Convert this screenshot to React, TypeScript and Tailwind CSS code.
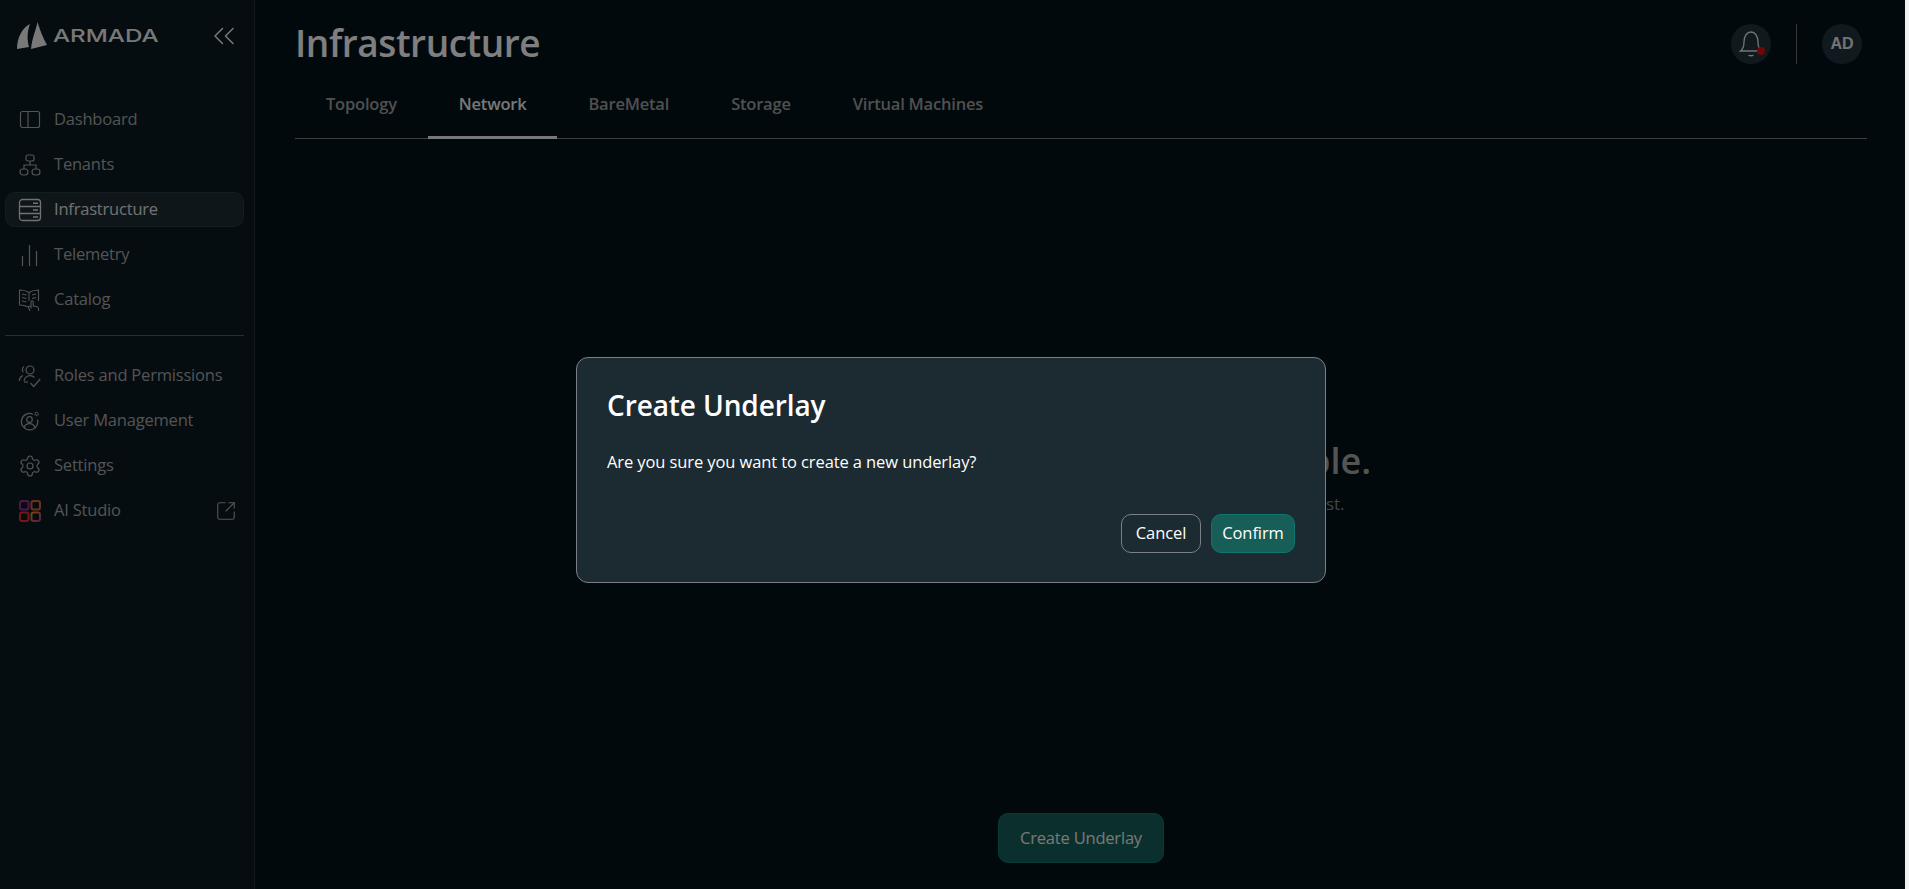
import { ChevronsLeft, Settings, SquareArrowOutUpRight } from "lucide-react"
import type { ReactNode } from "react"

function DashboardIcon() {
  return (
    <svg width="24" height="24" viewBox="0 0 24 24" fill="none" stroke="currentColor" strokeWidth="1.2">
      <rect x="2.5" y="3.5" width="19" height="16" rx="2" />
      <path d="M10 3.5v16" />
    </svg>
  )
}

function TenantsIcon() {
  return (
    <svg width="24" height="24" viewBox="0 0 24 24" fill="none" stroke="currentColor" strokeWidth="1.2">
      <rect x="8" y="2" width="8" height="6" rx="2" />
      <path d="M12 8v4M6 16v-4h12v4" />
      <rect x="2" y="16" width="8" height="6" rx="3" />
      <rect x="14" y="16" width="8" height="6" rx="3" />
    </svg>
  )
}

function InfraIcon() {
  return (
    <svg width="24" height="24" viewBox="0 0 24 24" fill="none" stroke="currentColor" strokeWidth="1.3">
      <rect x="1.5" y="1.5" width="21" height="21" rx="3" />
      <path d="M1.5 8.5h21M1.5 15.5h21" />
      <path d="M15 5.2h5M15 12h5M15 19h5" strokeWidth="1.6" />
    </svg>
  )
}

function TelemetryIcon() {
  return (
    <svg width="24" height="24" viewBox="0 0 24 24" fill="none" stroke="currentColor" strokeWidth="1.2">
      <path d="M4.5 13v10M11.5 2v21M18.5 8v15" />
    </svg>
  )
}

function CatalogIcon() {
  return (
    <svg width="24" height="24" viewBox="0 0 24 24" fill="none" stroke="currentColor" strokeWidth="1.1">
      <path d="M11 4.5C8 2.5 4.5 2 1.5 2v15c3 0 6 .5 8.5 2" />
      <path d="M11 4.5C14 2.5 17.5 2 20.5 2v11" />
      <path d="M11 4.5V13" />
      <path d="M4 6l4.5 1M4 9.5l4.5 1M4 13l4.5 1M14 7l4-1M14 10.5l4-1" />
      <path d="M12 23l-1.5-3.5c-.5-1.2 1-2 1.8-1l.7 1v-5.7c0-1.4 2.2-1.4 2.2 0V18l3.8.8c1 .2 1.7 1.1 1.6 2.2l-.2 2" />
    </svg>
  )
}

function RolesIcon() {
  return (
    <svg width="24" height="24" viewBox="0 0 24 24" fill="none" stroke="currentColor" strokeWidth="1.2">
      <circle cx="12" cy="6" r="4" />
      <path d="M6 2.6C4.2 3.6 3.6 6.4 5.4 8.2" />
      <path d="M4.8 11.5C2.8 12.5 1.5 14.3 1.2 17" />
      <path d="M6 17c.4-3 3-5.4 6-5.4 1.8 0 3.2.6 4.4 1.7" />
      <path d="M6 18h4" />
      <path d="M12.5 19l3.2 3.5 6.5-7.5" />
    </svg>
  )
}

function UserMgmtIcon() {
  return (
    <svg width="24" height="24" viewBox="0 0 24 24" fill="none" stroke="currentColor" strokeWidth="1.2">
      <path d="M15 5.2A8.2 8.2 0 1 0 19.5 10.5" />
      <circle cx="11.5" cy="10.5" r="2.8" />
      <path d="M6.2 18.5c.8-2.4 2.8-3.8 5.3-3.8s4.5 1.4 5.3 3.8" />
      <circle cx="18.5" cy="5" r="1.6" strokeDasharray="1.2 0.5" strokeWidth="1.3" />
    </svg>
  )
}

function AiStudioIcon() {
  return (
    <svg width="24" height="24" viewBox="0 0 24 24" fill="none" strokeWidth="2">
      <defs>
        <linearGradient id="aiStudioGrad" x1="13" y1="13" x2="24" y2="24" gradientUnits="userSpaceOnUse">
          <stop offset="0" stopColor="#f0932b" />
          <stop offset="1" stopColor="#a8269a" />
        </linearGradient>
      </defs>
      <rect x="2" y="2" width="8.5" height="8.5" rx="2" stroke="#a8269a" />
      <rect x="13.5" y="2" width="8.5" height="8.5" rx="2" stroke="#e0632f" />
      <rect x="2" y="13.5" width="8.5" height="8.5" rx="2" stroke="#e0322f" />
      <rect x="13.5" y="13.5" width="8.5" height="8.5" rx="2" stroke="url(#aiStudioGrad)" />
    </svg>
  )
}

function NavItem({ icon, label, active, trailing }: { icon: ReactNode; label: string; active?: boolean; trailing?: ReactNode }) {
  return (
    <div
      className={
        "flex h-[35px] items-center gap-3 rounded-[10px] border pl-[12px] pr-[5px] text-[16.5px] tracking-[-0.2px] " +
        (active ? "border-[#2a3a42] bg-[#1e2c33] text-[#e2e2e2]" : "border-transparent text-[#a8a8a8]")
      }
    >
      <span className="shrink-0">{icon}</span>
      <span className="flex-1">{label}</span>
      {trailing}
    </div>
  )
}

function Sidebar() {
  return (
    <aside className="flex h-full w-[255px] shrink-0 flex-col border-r border-[#2a3339] bg-[#0a1a22] pl-[5px] pr-[10px] text-[#a8a8a8]">
      <div className="flex h-[102px] items-start justify-between pl-[11px] pr-[2px] pt-[22px]">
        <div className="flex items-center gap-[5px]">
          <svg width="32" height="28" viewBox="16 22 32 28" fill="#f2f2f2">
            <path d="M17 49C17 38 22 28 30 24C27 32 27 40 29 47Z" />
            <path d="M37.5 22C36 30 32 38 31 49L47 45C43 38 40 30 37.5 22Z" />
          </svg>
          <span className="w-[107px] origin-left scale-x-[1.38] font-['Inter',sans-serif] text-[17.5px] font-medium leading-none text-[#f2f2f2]">
            ARMADA
          </span>
        </div>
        <ChevronsLeft size={36} strokeWidth={1} className="-mt-[4px] text-[#f2f2f2]" />
      </div>
      <nav className="flex flex-col gap-[10px]">
        <NavItem icon={<DashboardIcon />} label="Dashboard" />
        <NavItem icon={<TenantsIcon />} label="Tenants" />
        <NavItem icon={<InfraIcon />} label="Infrastructure" active />
        <NavItem icon={<TelemetryIcon />} label="Telemetry" />
        <NavItem icon={<CatalogIcon />} label="Catalog" />
      </nav>
      <div className="mb-[22px] mt-[18px] h-px bg-[#54595c]" />
      <nav className="flex flex-col gap-[10px]">
        <NavItem icon={<RolesIcon />} label="Roles and Permissions" />
        <NavItem icon={<UserMgmtIcon />} label="User Management" />
        <NavItem icon={<Settings size={24} strokeWidth={1.2} />} label="Settings" />
        <NavItem
          icon={<AiStudioIcon />}
          label="AI Studio"
          trailing={<SquareArrowOutUpRight size={22} strokeWidth={1.2} className="mr-[1px]" />}
        />
      </nav>
    </aside>
  )
}

const tabs = ["Topology", "Network", "BareMetal", "Storage", "Virtual Machines"]

function Main() {
  return (
    <main className="flex h-full flex-1 flex-col bg-[#02121a] pl-[40px] pr-[38px] text-white">
      <header className="flex h-[88px] items-start justify-between">
        <h1 className="mt-[15px] text-[37px] font-semibold leading-[56px] tracking-[-0.45px]">Infrastructure</h1>
        <div className="mr-[5px] mt-[24px] flex items-center">
          <div className="relative flex h-10 w-10 items-center justify-center rounded-full bg-[#20323a]">
            <svg width="24" height="28" viewBox="0 0 24 28" fill="none" stroke="#e8e8e8" strokeWidth="1.3">
              <path d="M1.5 21h21c-2.5-2-3.5-4-3.5-9 0-6-3-10-7-10s-7 4-7 10c0 5-1 7-3.5 9Z" />
              <path d="M9.5 25c1.2 1 3.8 1 5 0" />
            </svg>
            <span className="absolute left-[26px] top-[23px] h-2 w-2 rounded-full bg-[#e00f0f]" />
          </div>
          <div className="mx-[25px] h-10 w-px bg-[#6a6f72]" />
          <div className="flex h-10 w-10 items-center justify-center rounded-full bg-[#20323a] font-['Liberation_Sans',sans-serif] text-[16px] font-bold text-[#e8e8e8]">
            AD
          </div>
        </div>
      </header>
      <div className="flex h-[51px] border-b border-[#7c8285] text-[16.5px] font-semibold tracking-[-0.2px]">
        {tabs.map((tab) =>
          tab === "Network" ? (
            <div key={tab} className="-mb-px flex items-start border-b-[3px] border-[#f0f0f0] px-[31px] pt-[4px] text-[#f0f0f0]">
              {tab}
            </div>
          ) : (
            <div key={tab} className="flex items-start px-[31px] pt-[4px] text-[#a0a0a0]">
              {tab}
            </div>
          ),
        )}
      </div>
      <section className="flex flex-1 flex-col items-center">
        <h2 className="mt-[294px] text-center text-[36px] font-semibold leading-[56px] text-[#a8a8a8]">
          No underlay network is available.
        </h2>
        <p className="mt-[3px] text-center text-[17px] leading-[24px] text-[#8a8a8a]">
          To view the network topology here, please create an underlay first.
        </p>
        <button className="mb-[26px] mt-auto flex h-[50px] w-[166px] items-center justify-center rounded-[10px] border border-[#0f766e] bg-[#175e59] text-[16.5px] tracking-[-0.2px] text-[#f0f0f0]">
          Create Underlay
        </button>
      </section>
    </main>
  )
}

function ConfirmDialog() {
  return (
    <div className="fixed inset-y-0 left-0 right-[4px] flex justify-center bg-black/50 pr-[3px] pt-[357px]">
      <div className="flex h-[226px] w-[750px] flex-col rounded-xl border border-[#7a8084] bg-[#1c2a31] px-[30px] pb-[29px] text-white">
        <h3 className="mt-[26px] text-[28px] font-semibold leading-[42px] tracking-[-0.1px]">Create Underlay</h3>
        <p className="mt-[23px] text-[16.5px] leading-[26px] tracking-[-0.1px]">Are you sure you want to create a new underlay?</p>
        <div className="mt-auto flex justify-end gap-[10px] text-[16.5px] tracking-[-0.1px]">
          <button className="flex h-[39px] w-[80px] items-center justify-center rounded-[10px] border border-[#7a8084]">Cancel</button>
          <button className="flex h-[39px] w-[84px] items-center justify-center rounded-[10px] border border-[#0f766e] bg-[#175e59]">Confirm</button>
        </div>
      </div>
    </div>
  )
}

export default function App() {
  return (
    <div className="flex h-screen w-full overflow-hidden font-['Open_Sans',sans-serif]">
      <Sidebar />
      <Main />
      <div className="w-[4px] shrink-0 bg-[#f1f1f1]" />
      <ConfirmDialog />
    </div>
  )
}
